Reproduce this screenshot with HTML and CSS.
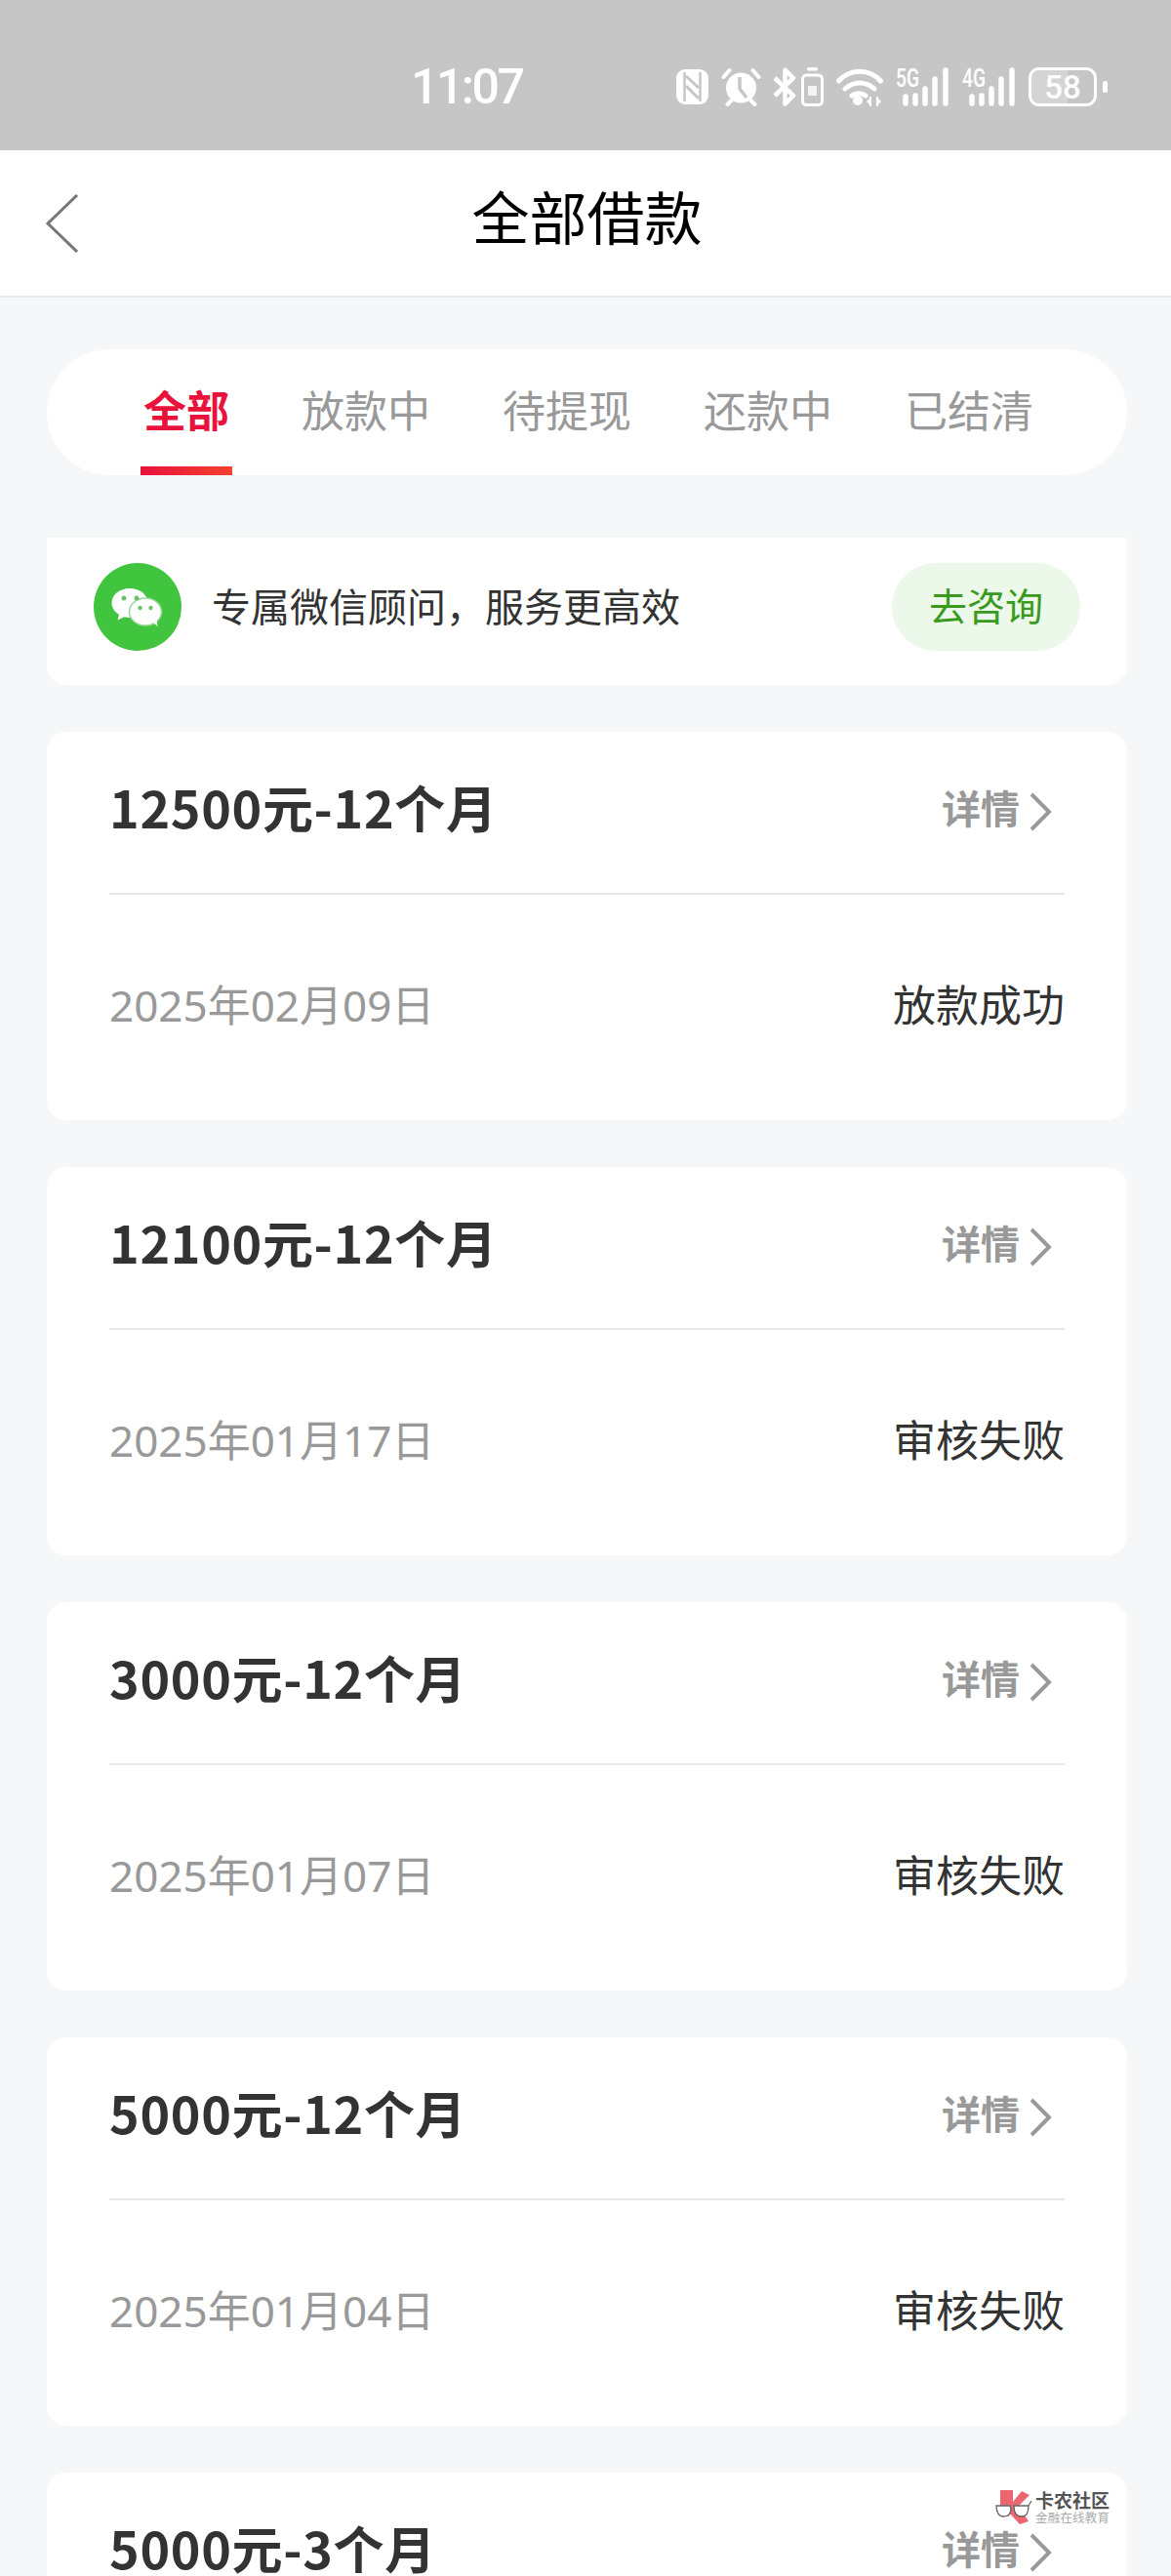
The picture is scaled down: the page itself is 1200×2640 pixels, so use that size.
FILE: index.html
```html
<!DOCTYPE html>
<html lang="zh-CN">
<head>
 <meta charset="UTF-8">
 <title>全部借款</title>
 <link rel="stylesheet" href="styles.css">
</head>
<body>
 <div class="status-bar">
  <span class="time">11:07</span>
  <div class="status-icons">
   <svg class="ic-nfc" width="35" height="36" viewBox="0 0 35 36"><rect x="1" y="0" width="33" height="36" rx="9" fill="#fff"/><path d="M9.500 3v30M25.500 3v30" stroke="#c6c6c6" stroke-width="2.500" fill="none"/><path d="M11 7l13 12M11 17l13 13" stroke="#c6c6c6" stroke-width="3" fill="none"/></svg>
   <svg class="ic-alarm" width="41" height="40" viewBox="0 0 41 40"><circle cx="20.500" cy="21" r="15.500" fill="#fff"/><path d="M19 10v12l7 9" stroke="#c6c6c6" stroke-width="3.500" fill="none"/><path d="M2.500 10l6-7M38.500 10l-6-7M6.500 38l4-4M34.500 38l-4-4" stroke="#fff" stroke-width="4" stroke-linecap="round" fill="none"/></svg>
   <svg class="ic-bt" width="24" height="40" viewBox="0 0 24 40"><path d="M2 11l19 18-8.500 8.500v-35L21 11 2 29" stroke="#fff" stroke-width="4.500" stroke-linejoin="round" fill="none"/></svg>
   <svg class="ic-cell" width="23" height="40" viewBox="0 0 23 40"><rect x="6" y="0" width="11" height="3.500" rx="1.500" fill="#fff"/><rect x="1.500" y="8" width="20" height="30.500" rx="4" fill="none" stroke="#fff" stroke-width="3"/><rect x="7" y="19" width="9" height="10" rx="1" fill="#fff" opacity=".8"/></svg>
   <svg class="ic-wifi" width="48" height="40" viewBox="0 0 48 40"><path d="M2.500 14C14 1 34 1 45.500 14M9 22c9-8 21-8 30 0M16 29c4-3 10-3 14 0" stroke="#fff" stroke-width="5" stroke-linecap="round" fill="none"/><circle cx="22" cy="34" r="5" fill="#fff"/><path d="M35 30v10M42 30v10" stroke="#fff" stroke-width="2"/><path d="M35 31l-4 4 4 4zM42 31l4 4-4 4z" fill="#fff"/></svg>
   <svg class="ic-sig" width="55" height="40" viewBox="0 0 55 40"><text x="0" y="20" class="sig-label" textLength="24" lengthAdjust="spacingAndGlyphs">5G</text><path d="M10 30v7M20 29v8M30 22v15M40 12v25M51 3v34" stroke="#fff" stroke-width="5.500" stroke-linecap="round" fill="none"/></svg>
   <svg class="ic-sig" width="55" height="40" viewBox="0 0 55 40"><text x="0" y="20" class="sig-label" textLength="24" lengthAdjust="spacingAndGlyphs">4G</text><path d="M10 30v7M20 29v8M30 22v15M40 12v25M51 3v34" stroke="#fff" stroke-width="5.500" stroke-linecap="round" fill="none"/></svg>
   <div class="battery">
    <div class="battery-body">
     <div class="battery-level"></div>
     <span class="battery-num">58</span>
    </div>
    <div class="battery-nub"></div>
   </div>
  </div>
 </div>

 <div class="header">
  <svg class="back" width="36" height="60" viewBox="0 0 36 60"><path d="M33 1L3 30l30 29" stroke="#777" stroke-width="3" fill="none"/></svg>
  <h1 class="title">全部借款</h1>
 </div>

 <div class="content">
  <div class="tabs">
   <span class="tab tab-active">全部</span>
   <span class="tab">放款中</span>
   <span class="tab">待提现</span>
   <span class="tab">还款中</span>
   <span class="tab">已结清</span>
  </div>

  <div class="advisor">
   <svg class="wechat" width="90" height="90" viewBox="0 0 90 90">
    <circle cx="45" cy="45" r="45" fill="#41c43e"/>
    <path d="M37 26c-10.500 0-18.500 6.500-18.500 15 0 5 3 9 7.500 11.800L24.500 58.500l7-3.300c1.800.5 3.600.7 5.500.7 10.500 0 18.500-6.700 18.500-15S47.500 26 37 26z" fill="#fff"/>
    <ellipse cx="53" cy="50" rx="16.500" ry="14" fill="#fff" stroke="#9fd69d" stroke-width="1.500"/>
    <path d="M60 60l5.500 5-1-7z" fill="#fff"/>
    <circle cx="31" cy="36" r="2.500" fill="#6fc06b"/><circle cx="44" cy="36" r="2.500" fill="#6fc06b"/>
    <circle cx="47.500" cy="46" r="2.200" fill="#6fc06b"/><circle cx="58.500" cy="46" r="2.200" fill="#6fc06b"/>
   </svg>
   <span class="advisor-text">专属微信顾问，服务更高效</span>
   <span class="advisor-btn">去咨询</span>
  </div>

  <div class="card">
   <div class="card-top">
    <span class="amount">12500元-12个月</span>
    <span class="detail">详情<svg class="chev" width="22" height="40" viewBox="0 0 22 40"><path d="M1 2l18 18L1 38" stroke="#999" stroke-width="4" fill="none"/></svg></span>
   </div>
   <div class="card-bottom">
    <span class="date">2025年02月09日</span>
    <span class="state">放款成功</span>
   </div>
  </div>

  <div class="card">
   <div class="card-top">
    <span class="amount">12100元-12个月</span>
    <span class="detail">详情<svg class="chev" width="22" height="40" viewBox="0 0 22 40"><path d="M1 2l18 18L1 38" stroke="#999" stroke-width="4" fill="none"/></svg></span>
   </div>
   <div class="card-bottom">
    <span class="date">2025年01月17日</span>
    <span class="state">审核失败</span>
   </div>
  </div>

  <div class="card">
   <div class="card-top">
    <span class="amount">3000元-12个月</span>
    <span class="detail">详情<svg class="chev" width="22" height="40" viewBox="0 0 22 40"><path d="M1 2l18 18L1 38" stroke="#999" stroke-width="4" fill="none"/></svg></span>
   </div>
   <div class="card-bottom">
    <span class="date">2025年01月07日</span>
    <span class="state">审核失败</span>
   </div>
  </div>

  <div class="card">
   <div class="card-top">
    <span class="amount">5000元-12个月</span>
    <span class="detail">详情<svg class="chev" width="22" height="40" viewBox="0 0 22 40"><path d="M1 2l18 18L1 38" stroke="#999" stroke-width="4" fill="none"/></svg></span>
   </div>
   <div class="card-bottom">
    <span class="date">2025年01月04日</span>
    <span class="state">审核失败</span>
   </div>
  </div>

  <div class="card">
   <div class="card-top">
    <span class="amount">5000元-3个月</span>
    <span class="detail">详情<svg class="chev" width="22" height="40" viewBox="0 0 22 40"><path d="M1 2l18 18L1 38" stroke="#999" stroke-width="4" fill="none"/></svg></span>
   </div>
  </div>
 </div>

 <div class="watermark">
  <svg width="38" height="36" viewBox="0 0 38 36">
   <path d="M5 1h13v12L27 2l8 4-11 11 10 16-9 3-10-11-1 3-9-2z" fill="#ec6670"/>
   <path d="M1 17h14l1 3c0 5-3 8-8 8-4 0-7-4-7-11zM19 17h15c0 7-2 11-7 11-5 0-8-4-8-11z" fill="#fff" stroke="#666" stroke-width="1.300"/>
   <path d="M34 17l3-5" stroke="#666" stroke-width="1.300"/>
  </svg>
  <div class="wm-text">
   <span class="wm-name">卡农社区</span>
   <span class="wm-sub">金融在线教育</span>
  </div>
 </div>
</body>
</html>
```

FILE: styles.css
```css
html, body {
height: 2640px;
overflow: hidden;
}
body {
margin: 0;
position: relative;
background-color: #f6f7f9;
color: #333;
font-family: "Noto Sans CJK SC", "Noto Sans", sans-serif;
}

/* status bar */
.status-bar {
height: 154px;
background-color: #c6c6c6;
display: flex;
align-items: center;
padding: 24px 0 0 421px;
box-sizing: border-box;
}
.time {
font-family: Roboto, sans-serif;
font-size: 50px;
font-weight: 500;
letter-spacing: -2.500px;
color: #fff;
width: 271px;
}
.status-icons {
display: flex;
align-items: center;
}
.status-icons svg {
display: block;
}
.ic-alarm { margin-left: 12px; }
.ic-bt { margin-left: 12px; }
.ic-cell { margin-left: 5px; }
.ic-wifi { margin-left: 13px; }
.ic-sig {
margin-left: 13px;
overflow: visible;
}
.sig-label {
font-family: Roboto, sans-serif;
font-size: 25px;
font-weight: 500;
fill: #fff;
}
.battery {
display: flex;
align-items: center;
margin-left: 13px;
}
.battery-body {
position: relative;
width: 70px;
height: 40px;
box-sizing: border-box;
border: 3px solid #fff;
border-radius: 11px;
display: flex;
align-items: center;
justify-content: center;
overflow: hidden;
}
.battery-level {
position: absolute;
left: 0;
top: 0;
bottom: 0;
width: 58%;
background-color: #d4d4d4;
}
.battery-num {
position: relative;
font-family: Roboto, sans-serif;
font-size: 33px;
font-weight: 500;
color: #fff;
}
.battery-nub {
width: 5px;
height: 12px;
margin-left: 6px;
border-radius: 2px;
background-color: #fff;
}

/* header */
.header {
height: 151px;
background-color: #fff;
border-bottom: 2px solid #e8e9ea;
box-sizing: border-box;
padding: 0 0 16px 3px;
display: flex;
align-items: center;
justify-content: center;
position: relative;
}
.back {
position: absolute;
left: 46px;
top: 45px;
}
.title {
margin: 0;
font-size: 59px;
font-weight: 400;
color: #000;
}

.content {
padding: 53px 45px 0 48px;
}

/* tabs */
.tabs {
height: 129px;
border-radius: 65px;
background-color: #fff;
display: flex;
padding-left: 99px;
gap: 74px;
box-sizing: border-box;
margin-bottom: 64px;
}
.tab {
font-size: 44px;
line-height: 122px;
color: #999;
position: relative;
}
.tab-active {
color: #e8123c;
font-weight: 700;
}
.tab-active::after {
content: "";
position: absolute;
left: -3px;
right: -3px;
bottom: 0;
height: 9px;
background: linear-gradient(90deg, #e8123c, #f5402f);
}

/* advisor banner */
.advisor {
height: 151px;
background-color: #fff;
border-radius: 0 0 20px 20px;
display: flex;
align-items: center;
padding: 0 48px 9px;
box-sizing: border-box;
margin-bottom: 48px;
}
.wechat {
flex-shrink: 0;
}
.advisor-text {
font-size: 40px;
margin: 0 0 4px 31px;
flex: 1;
}
.advisor-btn {
width: 193px;
height: 90px;
border-radius: 45px;
background-color: #ecf8ea;
color: #3a9a1e;
font-size: 39px;
line-height: 84px;
text-align: center;
}

/* cards */
.card {
height: 398px;
background-color: #fff;
border-radius: 20px;
padding: 0 64px;
box-sizing: border-box;
margin-bottom: 48px;
}
.card-top {
height: 167px;
border-bottom: 2px solid #e7e7e7;
box-sizing: border-box;
padding-bottom: 12px;
display: flex;
align-items: center;
justify-content: space-between;
}
.amount {
font-size: 52px;
font-weight: 700;
letter-spacing: .7px;
}
.detail {
display: flex;
align-items: center;
font-size: 40px;
font-weight: 700;
color: #999;
margin-right: 13px;
}
.chev {
margin: 11px 0 0 11px;
}
.card-bottom {
padding-top: 81px;
display: flex;
align-items: baseline;
justify-content: space-between;
}
.date {
font-family: "Noto Sans", "Noto Sans CJK SC", sans-serif;
font-size: 44px;
line-height: 60px;
color: #999;
}
.state {
font-size: 44px;
line-height: 60px;
}

/* watermark over the last card */
.watermark {
position: absolute;
left: 1020px;
top: 2551px;
display: flex;
align-items: center;
gap: 3px;
}
.wm-text {
display: flex;
flex-direction: column;
}
.wm-name {
font-size: 19px;
line-height: 22px;
font-weight: 700;
color: #555;
}
.wm-sub {
font-size: 12.500px;
line-height: 14px;
letter-spacing: .2px;
color: #aaa;
}
```
